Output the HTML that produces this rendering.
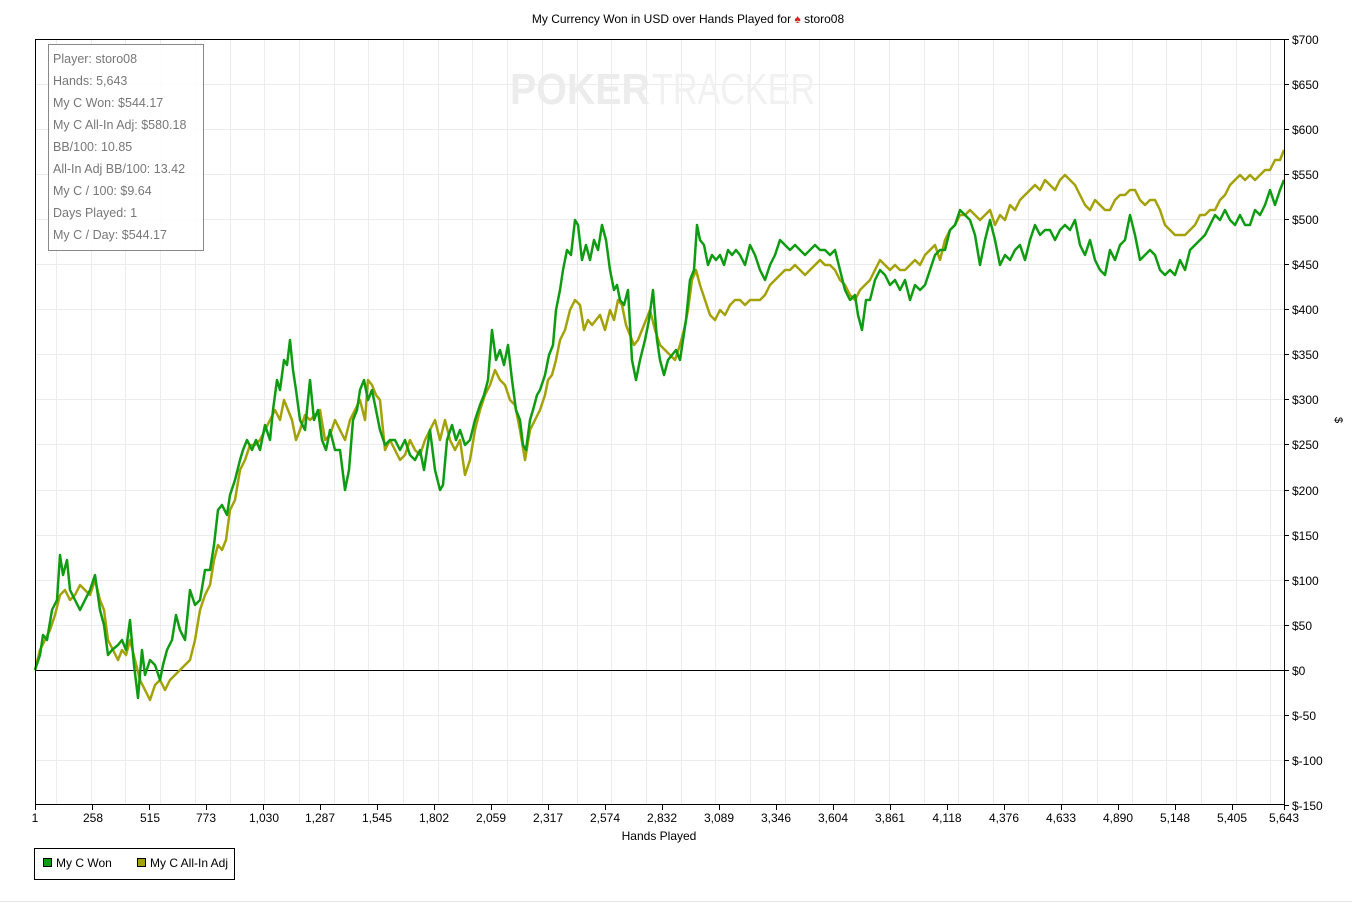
<!DOCTYPE html>
<html><head><meta charset="utf-8"><style>
html,body{margin:0;padding:0;background:#fff;}
svg{display:block;font-family:"Liberation Sans",Arial,sans-serif;}
</style></head><body>
<svg width="1352" height="904" viewBox="0 0 1352 904" xmlns="http://www.w3.org/2000/svg">
<rect width="1352" height="904" fill="#fff"/>
<text x="688" y="23" font-size="12" text-anchor="middle" fill="#000">My Currency Won in USD over Hands Played for <tspan fill="#d22">♠</tspan> storo08</text>
<g stroke="#ececec" stroke-width="1">
<line x1="35" y1="84.5" x2="1284" y2="84.5"/><line x1="35" y1="129.5" x2="1284" y2="129.5"/><line x1="35" y1="174.5" x2="1284" y2="174.5"/><line x1="35" y1="219.5" x2="1284" y2="219.5"/><line x1="35" y1="264.5" x2="1284" y2="264.5"/><line x1="35" y1="309.5" x2="1284" y2="309.5"/><line x1="35" y1="354.5" x2="1284" y2="354.5"/><line x1="35" y1="399.5" x2="1284" y2="399.5"/><line x1="35" y1="444.5" x2="1284" y2="444.5"/><line x1="35" y1="490.5" x2="1284" y2="490.5"/><line x1="35" y1="535.5" x2="1284" y2="535.5"/><line x1="35" y1="580.5" x2="1284" y2="580.5"/><line x1="35" y1="625.5" x2="1284" y2="625.5"/><line x1="35" y1="715.5" x2="1284" y2="715.5"/><line x1="35" y1="760.5" x2="1284" y2="760.5"/>
<path d="M56.5 39V805M91.5 39V805M125.5 39V805M160.5 39V805M195.5 39V805M230.5 39V805M264.5 39V805M299.5 39V805M334.5 39V805M368.5 39V805M403.5 39V805M438.5 39V805M472.5 39V805M507.5 39V805M542.5 39V805M577.5 39V805M611.5 39V805M646.5 39V805M681.5 39V805M715.5 39V805M750.5 39V805M785.5 39V805M819.5 39V805M854.5 39V805M889.5 39V805M924.5 39V805M958.5 39V805M993.5 39V805M1028.5 39V805M1062.5 39V805M1097.5 39V805M1132.5 39V805M1166.5 39V805M1201.5 39V805M1236.5 39V805M1270.5 39V805"/>
</g>
<text x="510" y="104" font-size="44" font-weight="bold" fill="#ececec" textLength="140" lengthAdjust="spacingAndGlyphs">POKER</text>
<text x="652" y="104" font-size="44" fill="#f1f1f1" textLength="163" lengthAdjust="spacingAndGlyphs">TRACKER</text>
<line x1="35" y1="670.5" x2="1284" y2="670.5" stroke="#000" stroke-width="1"/>
<polyline fill="none" stroke="#a3a20a" stroke-width="2.5" stroke-linejoin="round" points="35,670 40,650 45,640 50,630 55,615 60,595 65,590 70,600 75,595 80,585 85,590 90,595 95,580 100,600 104,610 108,640 113,650 118,660 122,650 126,655 130,640 135,660 140,680 145,690 150,700 155,685 160,680 165,690 170,680 175,675 180,670 185,665 190,660 195,640 200,610 205,595 210,585 214,560 218,545 222,550 226,540 230,510 235,500 240,470 245,460 250,445 255,445 260,440 265,430 270,420 275,410 280,420 284,400 288,410 292,420 296,440 300,430 305,415 310,420 315,415 320,410 325,440 330,435 335,420 340,430 345,440 350,420 355,410 360,400 365,420 368,380 372,385 376,395 380,400 385,450 390,440 395,450 400,460 405,455 410,440 415,450 420,455 425,440 430,430 435,420 440,440 445,420 450,440 455,450 460,440 465,475 470,460 475,430 480,410 485,395 490,385 495,370 500,380 505,385 510,400 515,405 520,430 525,460 530,430 535,420 540,410 545,395 548,380 552,375 556,360 560,340 565,330 570,310 575,300 580,305 584,330 588,320 592,325 596,320 600,315 605,330 610,310 614,320 618,300 622,305 626,325 630,335 634,345 638,340 642,330 646,320 650,310 655,330 660,345 665,350 670,355 675,360 680,345 684,330 688,310 692,280 696,270 700,285 705,300 710,315 715,320 720,310 725,315 730,305 735,300 740,300 745,305 750,300 755,300 760,300 765,295 770,285 775,280 780,275 785,270 790,270 795,265 800,270 805,275 810,270 815,265 820,260 825,265 830,265 835,270 840,280 845,285 850,295 855,300 860,290 865,285 870,280 875,270 880,260 885,265 890,270 895,265 900,270 905,270 910,265 915,260 920,265 925,255 930,250 935,245 940,260 945,240 950,230 955,225 960,215 965,215 970,210 975,215 980,220 985,215 990,210 995,225 1000,215 1005,220 1010,205 1015,210 1020,200 1025,195 1030,190 1035,185 1040,190 1045,180 1050,185 1055,190 1060,180 1065,175 1070,180 1075,185 1080,195 1085,205 1090,210 1095,200 1100,205 1105,210 1110,210 1115,200 1120,195 1125,195 1130,190 1135,190 1140,200 1145,205 1150,200 1155,200 1160,210 1165,225 1170,230 1175,235 1180,235 1185,235 1190,230 1195,225 1200,215 1205,215 1210,210 1215,210 1220,200 1225,195 1230,185 1235,180 1240,175 1245,180 1250,175 1255,180 1260,175 1265,170 1270,170 1275,160 1280,160 1284,150"/>
<polyline fill="none" stroke="#0f9b12" stroke-width="2.5" stroke-linejoin="round" points="35,670 40,655 43,635 47,640 52,610 57,600 60,555 63,575 67,560 70,590 75,600 80,610 85,600 90,590 95,575 100,610 104,625 108,655 112,650 118,645 122,640 126,650 130,620 134,665 138,698 142,650 145,675 150,660 155,665 160,680 163,665 167,650 172,640 176,615 180,630 185,640 190,590 195,605 200,600 205,570 210,570 214,545 218,510 222,505 227,515 230,495 235,480 240,460 243,450 247,440 252,450 256,440 260,450 265,425 270,440 273,410 277,380 280,390 284,360 287,365 290,340 293,370 296,390 300,420 305,430 310,380 314,420 318,410 322,440 326,450 330,430 335,450 340,450 345,490 349,470 353,420 357,410 360,390 364,380 368,400 372,390 376,410 380,430 385,445 390,440 395,440 400,450 405,440 410,455 415,460 420,450 424,470 430,430 435,470 440,490 443,485 447,440 452,425 456,440 460,430 465,445 470,440 475,420 480,405 484,395 488,380 492,330 496,360 500,350 504,365 508,345 512,380 516,410 520,420 523,445 526,450 530,420 533,410 537,395 540,390 545,375 549,355 553,345 556,310 560,290 563,270 567,250 571,255 575,220 578,225 582,260 586,245 590,260 594,240 598,250 602,225 606,240 610,270 614,290 617,285 620,300 624,305 628,290 632,360 636,380 640,360 645,340 649,320 653,290 657,340 660,360 664,375 668,360 672,355 676,350 680,360 683,340 686,320 690,280 694,270 697,225 700,240 704,245 708,265 712,255 716,260 720,255 724,265 728,250 732,255 736,250 740,255 745,265 750,245 755,255 760,270 765,280 770,265 775,255 780,240 785,245 790,250 795,245 800,250 805,255 810,250 815,245 820,250 825,250 830,255 835,250 840,270 845,290 850,300 855,295 858,315 862,330 866,300 870,300 875,280 880,270 885,275 890,285 895,280 900,290 905,280 910,300 915,285 920,290 925,285 930,270 935,255 940,250 945,250 950,230 955,225 960,210 965,215 970,220 975,235 980,265 985,240 990,220 995,240 1000,265 1005,255 1010,260 1015,250 1020,245 1025,260 1030,240 1035,225 1040,235 1045,230 1050,230 1055,240 1060,230 1065,225 1070,230 1075,220 1080,245 1085,255 1090,240 1095,260 1100,270 1105,275 1110,250 1115,260 1120,245 1125,240 1130,215 1135,235 1140,260 1145,255 1150,250 1155,255 1160,270 1165,275 1170,270 1175,275 1180,260 1185,270 1190,250 1195,245 1200,240 1205,235 1210,225 1215,215 1220,220 1225,210 1230,220 1235,225 1240,215 1245,225 1250,225 1255,210 1260,215 1265,205 1270,190 1275,205 1280,190 1284,180"/>
<rect x="35.5" y="39.5" width="1249" height="765" fill="none" stroke="#000" stroke-width="1"/>
<rect x="48.5" y="44.5" width="155" height="206" fill="#fff" fill-opacity="0.9" stroke="#888" stroke-width="1"/>
<g font-size="12.5" fill="#777">
<text x="53" y="63">Player: storo08</text><text x="53" y="85">Hands: 5,643</text><text x="53" y="107">My C Won: $544.17</text><text x="53" y="129">My C All-In Adj: $580.18</text><text x="53" y="151">BB/100: 10.85</text><text x="53" y="173">All-In Adj BB/100: 13.42</text><text x="53" y="195">My C / 100: $9.64</text><text x="53" y="217">Days Played: 1</text><text x="53" y="239">My C / Day: $544.17</text>
</g>
<g stroke="#000" stroke-width="1"><path d="M1284 39.5h5M1284 84.5h5M1284 129.5h5M1284 174.5h5M1284 219.5h5M1284 264.5h5M1284 309.5h5M1284 354.5h5M1284 399.5h5M1284 444.5h5M1284 490.5h5M1284 535.5h5M1284 580.5h5M1284 625.5h5M1284 670.5h5M1284 715.5h5M1284 760.5h5M1284 805.5h5"/>
<path d="M35.5 805v5M92.5 805v5M149.5 805v5M206.5 805v5M263.5 805v5M320.5 805v5M377.5 805v5M434.5 805v5M491.5 805v5M548.5 805v5M605.5 805v5M662.5 805v5M719.5 805v5M776.5 805v5M833.5 805v5M890.5 805v5M947.5 805v5M1004.5 805v5M1061.5 805v5M1118.5 805v5M1175.5 805v5M1232.5 805v5M1284.5 805v5"/></g>
<g font-size="12" fill="#000">
<text x="1292" y="44">$700</text><text x="1292" y="89">$650</text><text x="1292" y="134">$600</text><text x="1292" y="179">$550</text><text x="1292" y="224">$500</text><text x="1292" y="269">$450</text><text x="1292" y="314">$400</text><text x="1292" y="359">$350</text><text x="1292" y="404">$300</text><text x="1292" y="449">$250</text><text x="1292" y="495">$200</text><text x="1292" y="540">$150</text><text x="1292" y="585">$100</text><text x="1292" y="630">$50</text><text x="1292" y="675">$0</text><text x="1292" y="720">$-50</text><text x="1292" y="765">$-100</text><text x="1292" y="810">$-150</text>
<text transform="translate(1335,420) rotate(90)" text-anchor="middle" font-size="11">$</text>
</g>
<g font-size="12" fill="#000" text-anchor="middle">
<text x="35" y="822">1</text><text x="93" y="822">258</text><text x="150" y="822">515</text><text x="206" y="822">773</text><text x="264" y="822">1,030</text><text x="320" y="822">1,287</text><text x="377" y="822">1,545</text><text x="434" y="822">1,802</text><text x="491" y="822">2,059</text><text x="548" y="822">2,317</text><text x="605" y="822">2,574</text><text x="662" y="822">2,832</text><text x="719" y="822">3,089</text><text x="776" y="822">3,346</text><text x="833" y="822">3,604</text><text x="890" y="822">3,861</text><text x="947" y="822">4,118</text><text x="1004" y="822">4,376</text><text x="1061" y="822">4,633</text><text x="1118" y="822">4,890</text><text x="1175" y="822">5,148</text><text x="1232" y="822">5,405</text><text x="1284" y="822">5,643</text>
<text x="659" y="840">Hands Played</text>
</g>
<rect x="34.5" y="848.5" width="200" height="31" fill="#fff" stroke="#000"/>
<rect x="43.5" y="858.5" width="8" height="8" fill="#0f9b12" stroke="#000"/>
<text x="56" y="867" font-size="12">My C Won</text>
<rect x="137.5" y="858.5" width="8" height="8" fill="#a3a20a" stroke="#000"/>
<text x="150" y="867" font-size="12">My C All-In Adj</text>
<line x1="0" y1="901.5" x2="1352" y2="901.5" stroke="#e4e4e4"/>
</svg>
</body></html>
